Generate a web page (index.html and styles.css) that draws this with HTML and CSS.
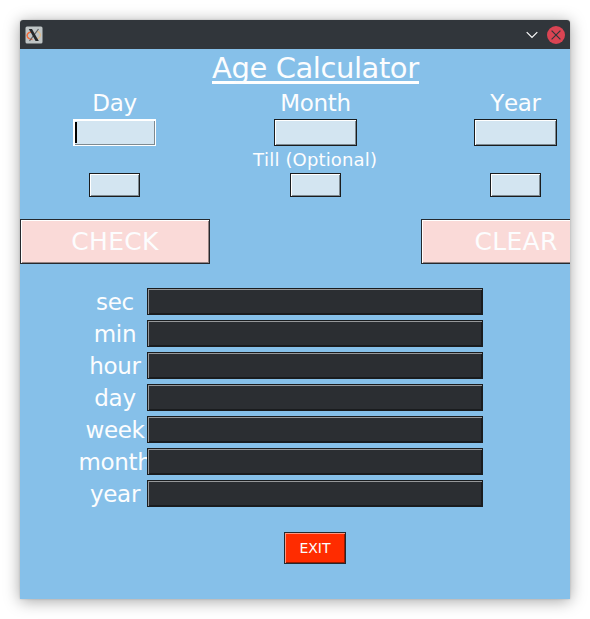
FILE: index.html
```html
<!DOCTYPE html>
<html lang="en">
<head>
<meta charset="utf-8">
<title>Age Calculator</title>
<link rel="stylesheet" href="styles.css">
</head>
<body>
<div class="window">
  <header class="titlebar">
    <svg class="app-icon" width="18" height="18" viewBox="0 0 18 18">
      <rect x=".5" y=".5" width="17" height="17" rx="1.5" fill="#bfc5c6"/>
      <path d="M6 6C2.500 6.500 1.500 9 2.500 11c.8 1.500 2.500 2.300 5 2.500" fill="none" stroke="#f26b3a" stroke-width="1.500"/>
      <path d="M12 5.500c3 .5 4 3 3 5-.8 1.600-2.500 2.600-5 3" fill="none" stroke="#dfbd8d" stroke-width="1.300"/>
      <path d="M13.500 3L4.500 15" stroke="#5a5f61" stroke-width="1.200"/>
      <path d="M3.800 3h3.200l6.800 12h-3.200z" fill="#24282a"/>
    </svg>
    <div class="controls">
      <svg width="12" height="8" viewBox="0 0 12 8"><path d="M.7 1.200L6 6.500l5.300-5.300" fill="none" stroke="#fcfcfc" stroke-width="1.200"/></svg>
      <svg width="18" height="18" viewBox="0 0 18 18"><circle cx="9" cy="9" r="9" fill="#da4453"/><path d="M4.600 4.600l8.800 8.800M13.400 4.600l-8.800 8.800" stroke="#31363b" stroke-width="1.200"/></svg>
    </div>
  </header>
  <main class="content">
    <h1 class="title"><span>Age Calculator</span></h1>
    <div class="columns labels">
      <label>Day</label><label>Month</label><label>Year</label>
    </div>
    <div class="columns">
      <div class="entry focused"></div><div class="entry"></div><div class="entry"></div>
    </div>
    <div class="till">Till (Optional)</div>
    <div class="columns">
      <div class="entry small"></div><div class="entry small"></div><div class="entry small"></div>
    </div>
    <div class="actions">
      <div class="action">CHECK</div><div class="action">CLEAR</div>
    </div>
    <div class="results">
      <div class="row"><span>sec</span><div class="output"></div></div>
      <div class="row"><span>min</span><div class="output"></div></div>
      <div class="row"><span>hour</span><div class="output"></div></div>
      <div class="row"><span>day</span><div class="output"></div></div>
      <div class="row"><span>week</span><div class="output"></div></div>
      <div class="row"><span>month</span><div class="output"></div></div>
      <div class="row"><span>year</span><div class="output"></div></div>
    </div>
    <div class="exit">EXIT</div>
  </main>
</div>
</body>
</html>
```
FILE: styles.css
```css
* { box-sizing: border-box; }
html { background: #fff; }
body { margin: 0; padding: 20px; height: 619px; overflow: hidden; font-family: "DejaVu Sans", sans-serif; font-kerning: none; color: #fcfdfe; }
.window { width: 550px; height: 579px; border-radius: 3px 3px 0 0; box-shadow: 0 2px 16px rgba(0,0,0,.36), 0 0 2px rgba(0,0,0,.2); }
.titlebar { height: 29px; background: #31363b; border-radius: 3px 3px 0 0; display: flex; justify-content: space-between; align-items: center; padding: 0 5px; }
.app-icon, .controls svg { display: block; }
.controls { display: flex; align-items: center; gap: 9px; }
.content { height: 550px; background: #86c0e9; overflow: hidden; }
.title { margin: 0; height: 40px; padding-left: 192px; font-size: 29px; font-weight: 400; line-height: 39px; letter-spacing: -.42px; }
.title span { display: block; width: 207px; height: 35px; border-bottom: 3px solid #fff; white-space: nowrap; }
.columns { display: grid; grid-template-columns: 189px 211px 189px; justify-items: center; width: 591px; }
.columns > :nth-child(n+2) { position: relative; left: 1px; }
.labels { height: 30px; font-size: 23px; line-height: 28px; letter-spacing: -.3px; }
.entry { width: 83px; height: 27px; background: #d3e5f1; border: 1px solid #1a1c1e; box-shadow: inset 1px 1px #fff, inset -1px -1px #7e8a91; }
.entry.small { width: 51px; height: 24px; }
.focused { border-color: #fff; padding: 2px 0 0 1px; }
.focused::before { content: ""; display: block; width: 2px; height: 21px; background: #000; }
.till { height: 27px; width: 590px; text-align: center; font-size: 18px; line-height: 28px; letter-spacing: .15px; }
.actions { display: flex; gap: 211px; width: 591px; margin-top: 22px; }
.action { flex: none; width: 190px; height: 45px; background: #fadad8; border: 1px solid #25292e; box-shadow: inset 1px 1px #fff, inset -1px -1px #968382; text-align: center; font-size: 25px; line-height: 43px; letter-spacing: .3px; }
.results { display: grid; gap: 5px; margin: 24px 0 0 30px; }
.row { display: flex; height: 27px; }
.row span { width: 97px; display: flex; justify-content: center; padding-left: 33px; font-size: 23px; line-height: 29px; letter-spacing: -.3px; white-space: nowrap; }
.output { position: relative; flex: none; width: 336px; height: 27px; background: #2b2e32; border: 1px solid #1a1c1e; box-shadow: inset 1px 1px #96989a, inset -1px -1px #1a1c1e; }
.exit { width: 62px; height: 32px; margin: 25px 0 0 264px; background: #ff2c00; border: 1px solid #25292e; box-shadow: inset 1px 1px #ff9680, inset -1px -1px #991a00; text-align: center; font-size: 14px; line-height: 30px; }
```
